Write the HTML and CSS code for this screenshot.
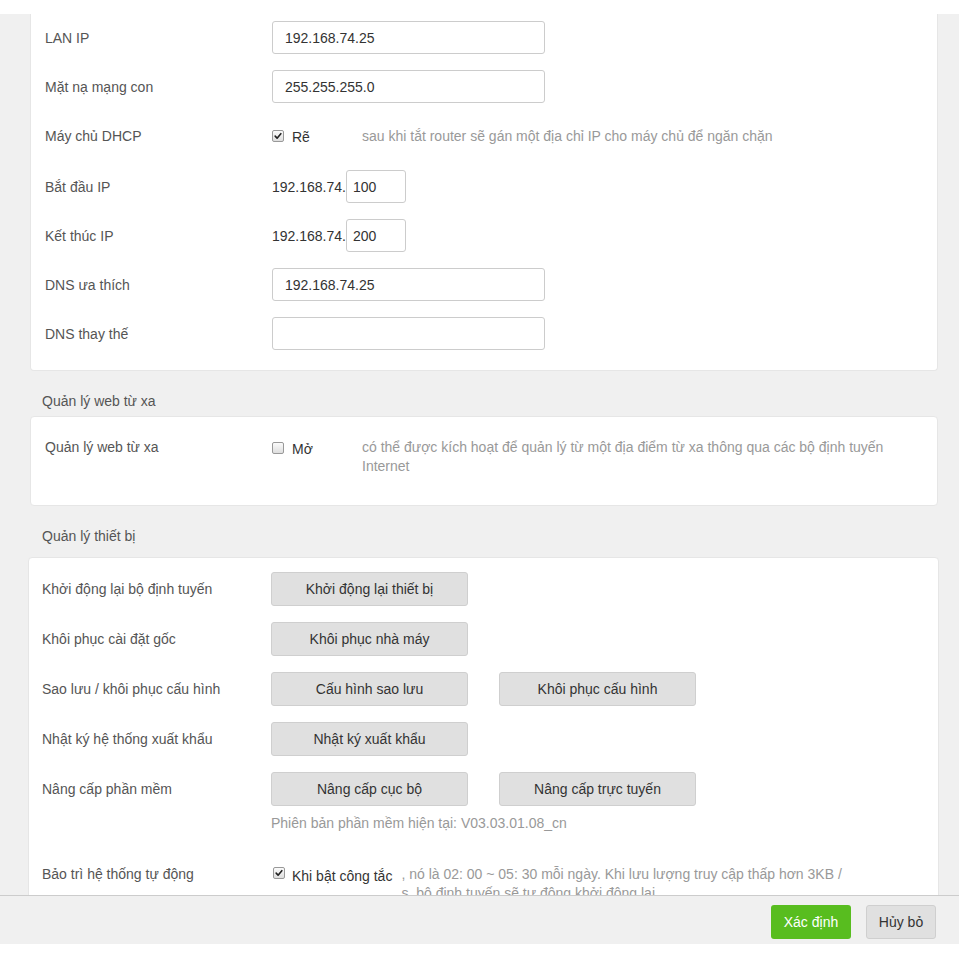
FILE: index.html
```html
<!DOCTYPE html>
<html lang="vi">
<head>
<meta charset="utf-8">
<title>Cài đặt hệ thống</title>
<link rel="stylesheet" href="styles.css">
</head>
<body>
<div class="topband"></div>
<main class="scroll">
  <section class="card card-lan">
    <div class="row">
      <div class="label">LAN IP</div>
      <input class="field" type="text" value="192.168.74.25">
    </div>
    <div class="row">
      <div class="label">Mặt nạ mạng con</div>
      <input class="field" type="text" value="255.255.255.0">
    </div>
    <div class="row row-dhcp">
      <div class="label">Máy chủ DHCP</div>
      <div class="check-group">
        <span class="cb checked"><svg viewBox="0 0 12 12" width="12" height="12"><path d="M2.6 6.2 L4.9 8.6 L9.4 3.2" fill="none" stroke="#222" stroke-width="1.9" stroke-linecap="round" stroke-linejoin="round"/></svg></span>
        <span class="cb-text">Rẽ</span>
      </div>
      <div class="hint">sau khi tắt router sẽ gán một địa chỉ IP cho máy chủ để ngăn chặn</div>
    </div>
    <div class="row">
      <div class="label">Bắt đầu IP</div>
      <span class="prefix">192.168.74.</span>
      <input class="field small" type="text" value="100">
    </div>
    <div class="row">
      <div class="label">Kết thúc IP</div>
      <span class="prefix">192.168.74.</span>
      <input class="field small" type="text" value="200">
    </div>
    <div class="row">
      <div class="label">DNS ưa thích</div>
      <input class="field" type="text" value="192.168.74.25">
    </div>
    <div class="row">
      <div class="label">DNS thay thế</div>
      <input class="field" type="text" value="">
    </div>
  </section>

  <h2 class="section-title first">Quản lý web từ xa</h2>
  <section class="card card-remote">
    <div class="text-row">
      <div class="label">Quản lý web từ xa</div>
      <div class="check-group">
        <span class="cb"></span>
        <span class="cb-text">Mở</span>
      </div>
      <div class="hint wrap">có thể được kích hoạt để quản lý từ một địa điểm từ xa thông qua các bộ định tuyến Internet</div>
    </div>
  </section>

  <h2 class="section-title second">Quản lý thiết bị</h2>
  <section class="card card-device">
    <div class="btn-row">
      <div class="label">Khởi động lại bộ định tuyến</div>
      <div class="controls"><div class="btns"><button class="btn">Khởi động lại thiết bị</button></div></div>
    </div>
    <div class="btn-row">
      <div class="label">Khôi phục cài đặt gốc</div>
      <div class="controls"><div class="btns"><button class="btn">Khôi phục nhà máy</button></div></div>
    </div>
    <div class="btn-row">
      <div class="label">Sao lưu / khôi phục cấu hình</div>
      <div class="controls"><div class="btns"><button class="btn">Cấu hình sao lưu</button><button class="btn">Khôi phục cấu hình</button></div></div>
    </div>
    <div class="btn-row">
      <div class="label">Nhật ký hệ thống xuất khẩu</div>
      <div class="controls"><div class="btns"><button class="btn">Nhật ký xuất khẩu</button></div></div>
    </div>
    <div class="btn-row">
      <div class="label">Nâng cấp phần mềm</div>
      <div class="controls">
        <div class="btns"><button class="btn">Nâng cấp cục bộ</button><button class="btn">Nâng cấp trực tuyến</button></div>
        <div class="version">Phiên bản phần mềm hiện tại: V03.03.01.08_cn</div>
      </div>
    </div>
    <div class="auto-row">
      <div class="label">Bảo trì hệ thống tự động</div>
      <span class="cb checked"><svg viewBox="0 0 12 12" width="12" height="12"><path d="M2.6 6.2 L4.9 8.6 L9.4 3.2" fill="none" stroke="#222" stroke-width="1.9" stroke-linecap="round" stroke-linejoin="round"/></svg></span>
      <span class="cb-text">Khi bật công tắc</span>
      <div class="hint auto">, nó là 02: 00 ~ 05: 30 mỗi ngày. Khi lưu lượng truy cập thấp hơn 3KB / s, bộ định tuyến sẽ tự động khởi động lại.</div>
    </div>
  </section>
</main>
<footer class="footer">
  <button class="btn-ok">Xác định</button>
  <button class="btn-cancel">Hủy bỏ</button>
</footer>
<div class="bottomband"></div>
</body>
</html>
```
FILE: styles.css
```css
* { box-sizing: border-box; }
html, body { margin: 0; padding: 0; }
body {
  height: 959px;
  display: flex;
  flex-direction: column;
  background: #ffffff;
  font-family: "Liberation Sans", Arial, sans-serif;
  font-size: 14px;
  color: #555;
  overflow: hidden;
}
.topband { height: 14px; flex: none; background: #fff; }
.bottomband { height: 15px; flex: none; background: #fff; }
.scroll {
  flex: 1;
  min-height: 0;
  overflow: hidden;
  background: #f0f0f0;
  padding: 0 21px 0 30px;
}
.card {
  background: #fff;
  border: 1px solid #e6e6e6;
  border-radius: 4px;
}
.card-lan {
  border-top: none;
  border-radius: 0 0 4px 4px;
  padding: 7px 14px 20px;
  display: flex;
  flex-direction: column;
  gap: 16px;
}
.row {
  display: flex;
  align-items: center;
  height: 33px;
}
.row-dhcp { margin-bottom: 2px; }
.label {
  width: 227px;
  flex: none;
  color: #555;
}
.field {
  width: 273px;
  height: 33px;
  border: 1px solid #ccc;
  border-radius: 3px;
  padding: 0 12px;
  font: inherit;
  color: #333;
  background: #fff;
  outline: none;
}
.field.small { width: 60px; padding: 0 6px; }
.prefix { color: #333; }
.check-group {
  width: 90px;
  flex: none;
  display: flex;
  align-items: center;
}
.cb {
  width: 12px;
  height: 12px;
  flex: none;
  border: 1px solid #999;
  border-radius: 2px;
  background: linear-gradient(#fbfbfb, #dedede);
  display: inline-flex;
  align-items: center;
  justify-content: center;
  overflow: hidden;
}
.cb svg { display: block; width: 10px; height: 10px; }
.cb-text {
  color: #333;
  margin-left: 8px;
  margin-top: 3px;
}
.hint { color: #999; }
.hint.wrap { width: 540px; line-height: 19px; }
.section-title {
  font-size: 14px;
  font-weight: normal;
  color: #555;
  line-height: 18px;
  margin: 21px 0 6px 12px;
}
.section-title.second { margin-bottom: 12px; }
.card-remote { padding: 21px 14px 29px; }
.text-row {
  display: flex;
  align-items: flex-start;
  line-height: 19px;
}
.text-row .check-group { height: 19px; }
.text-row .cb-text { margin-top: 4px; }
.card-device {
  margin: 0 -1px 0 -2px;
  padding: 14px 13px 30px;
  display: flex;
  flex-direction: column;
  gap: 16px;
}
.card-device .label { width: 229px; }
.btn-row { display: flex; align-items: flex-start; }
.btn-row .label { line-height: 34px; }
.btns { display: flex; gap: 31px; }
.btn {
  width: 197px;
  height: 34px;
  border: 1px solid #cfcfcf;
  border-radius: 3px;
  background: #e0e0e0;
  color: #333;
  font: inherit;
  padding: 0;
}
.version {
  color: #999;
  line-height: 18px;
  margin-top: 8px;
}
.auto-row {
  display: flex;
  align-items: flex-start;
  line-height: 19px;
  margin-top: 17px;
}
.auto-row .label { width: 230px; }
.auto-row .cb { margin-top: 2px; margin-left: 1px; }
.auto-row .cb-text { margin-left: 7px; margin-top: 2px; }
.hint.auto { width: 452px; margin-left: 9px; }
.footer {
  flex: none;
  height: 49px;
  border-top: 1px solid #cccccc;
  background: #f0f0f0;
  display: flex;
  justify-content: flex-end;
  align-items: flex-start;
  padding: 9px 23px 0 0;
  gap: 15px;
}
.btn-ok {
  width: 80px;
  height: 34px;
  border: none;
  border-radius: 3px;
  background: #58bd1f;
  color: #fff;
  font: inherit;
}
.btn-cancel {
  width: 70px;
  height: 34px;
  border: 1px solid #cfcfcf;
  border-radius: 3px;
  background: #e0e0e0;
  color: #333;
  font: inherit;
}
```
